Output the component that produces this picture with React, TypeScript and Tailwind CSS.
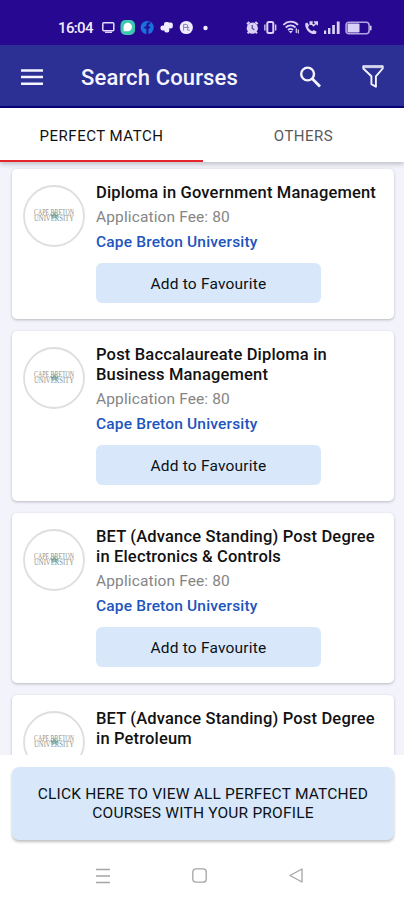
const courses: { lines: string[] }[] = [
  { lines: ["Diploma in Government Management"] },
  { lines: ["Post Baccalaureate Diploma in", "Business Management"] },
  { lines: ["BET (Advance Standing) Post Degree", "in Electronics & Controls"] },
  { lines: ["BET (Advance Standing) Post Degree", "in Petroleum"] },
];

function StatusBar() {
  return (
    <div className="h-[45px] shrink-0 bg-[#260990]">
      <svg width="404" height="45" viewBox="0 0 404 45" fill="none">
        <text x="58" y="33" fontSize="15" fontWeight="500" fill="#f0ecff" textLength="35.5" className="font-[Roboto,sans-serif]">16:04</text>
        <rect x="102.8" y="22.8" width="11" height="8" rx="1" stroke="#e1dcfa" strokeWidth="1.5" />
        <path d="M105 32.3h7" stroke="#e1dcfa" strokeWidth="1.3" />
        <rect x="120.5" y="20" width="14.5" height="15" rx="5" fill="#3cc9b0" />
        <path d="M123.6 31.2V27a4.2 4.2 0 1 1 4.2 4.2z" fill="#fff" />
        <circle cx="147.2" cy="27.5" r="6.6" fill="#1c70dd" />
        <path d="M146.4 34v-5.4h-2v-2.2h2v-1.2c0-2.1 1.1-3.1 3.8-2.8v1.9c-1.3-.1-1.8.2-1.8 1.2v.9h1.8l-.4 2.2h-1.4V34z" fill="#260990" />
        <g fill="#f0ecff">
          <rect x="164" y="22" width="5.4" height="5" rx="2" />
          <rect x="167.8" y="22.5" width="5" height="6" rx="2" />
          <rect x="160.5" y="25.5" width="5.5" height="5" rx="2" />
          <rect x="164.3" y="27.5" width="5" height="5" rx="2" />
          <path d="M164 25h5v5h-5z" />
        </g>
        <circle cx="186.3" cy="27.5" r="6.6" fill="#f0ecff" />
        <path d="M183.6 30.6v-6.2h2.6a1.5 1.5 0 0 1 0 3h-2.6m2.6 0h3m-1.5 0v2.8h2" stroke="#8d82b8" strokeWidth="1" />
        <circle cx="205.5" cy="28" r="2.2" fill="#f0ecff" />
        <circle cx="252.3" cy="28.2" r="5.6" fill="#d9d2f6" />
        <path d="m247 24 2.4-2.1m5.9 0 2.4 2.1M248.7 32l-1 1.4m8.2-1.4 1 1.4" stroke="#d9d2f6" strokeWidth="2" />
        <path d="M252.2 25v3.5l2.2 1.2" stroke="#483396" strokeWidth="1.1" />
        <rect x="267.3" y="22" width="6" height="11" rx="1.5" stroke="#d9d2f6" strokeWidth="2" />
        <path d="M264.9 24.5v6m10.8-6v6" stroke="#d9d2f6" strokeWidth="1.3" />
        <g stroke="#d9d2f6" strokeWidth="1.8">
          <path d="M283.3 24.8c4.5-4.1 10.4-4.1 14.7 0M285.7 27.5c3-2.7 6.9-2.7 9.8 0M288 30c1.5-1.3 3.5-1.3 5 0" />
        </g>
        <path d="m288.7 31 2 2.5 2-2.5z" fill="#d9d2f6" />
        <path d="M296.3 28.3v4.8m2-3.7v4.2" stroke="#d9d2f6" strokeWidth="1.2" />
        <path d="m305.2 23.5 2-1 2 3.1-1.2 1.4c1 2.2 2.2 3.3 4.3 4.2l1.4-1.2 3 1.8-1 2.2c-5.4 1-10.9-4.5-10.5-10.5z" fill="#d9d2f6" />
        <path d="m310.3 22 3.2 3.7 3.7-3.7m-3.3 0h3.3v3.3M310.3 25v-3h2.5" stroke="#d9d2f6" strokeWidth="1.6" />
        <g fill="#d9d2f6">
          <rect x="324" y="30.5" width="2.2" height="3.5" />
          <rect x="328" y="28" width="2.4" height="6" />
          <rect x="332.2" y="25" width="2.7" height="9" />
          <rect x="336.8" y="21.5" width="2.8" height="12.5" />
          <rect x="347.5" y="23.5" width="12" height="9" rx="1" />
          <rect x="370" y="25.5" width="1.5" height="5" rx=".7" />
        </g>
        <rect x="346.1" y="22.3" width="23" height="11.5" rx="3" stroke="#b1a5df" strokeWidth="1.6" />
      </svg>
    </div>
  );
}

function AppBar() {
  return (
    <header className="flex h-[63px] shrink-0 items-center border-b-2 border-[#080378] bg-[#2c2f93] pt-[2px] pr-[20px] pl-[21px]">
      <svg width="22" height="18" viewBox="0 0 22 18" fill="#f5f5ff">
        <path d="M0 1.2h22v2.5H0zM0 7.8h22v2.5H0zM0 14.4h22v2.5H0z" />
      </svg>
      <h1 className="ml-[38px] flex-1 pt-[3px] text-[22px] leading-7 font-medium tracking-[0.14px] whitespace-nowrap text-[#f5f5ff]">Search Courses</h1>
      <svg width="22" height="22" viewBox="0 0 22 22" fill="none" stroke="#f5f5ff" strokeWidth="2.4">
        <circle cx="8.6" cy="8" r="6.4" />
        <path d="m13.3 12.7 7.7 7.7" strokeWidth="2.8" />
      </svg>
      <svg className="ml-[41px]" width="22" height="23" viewBox="0 0 22 23" fill="none" stroke="#f5f5ff" strokeWidth="1.9" strokeLinejoin="round">
        <path d="M1.3 1.2h19.4v2.3l-6.8 7.8v10.5l-4.5-2.7v-7.8L1.3 3.5z" />
        <path d="M1.5 2.2h19" stroke="#c8cae9" />
      </svg>
    </header>
  );
}

function Tabs() {
  return (
    <nav className="relative z-10 flex h-[54px] shrink-0 bg-white text-[15px] shadow-[0_2px_5px_rgba(0,0,0,0.22)]">
      <div className="flex w-[203px] items-center justify-center border-b-2 border-[#e4252c] pt-[4px] text-[#111]">
        <span className="tracking-[0.5px] whitespace-nowrap">PERFECT MATCH</span>
      </div>
      <div className="flex flex-1 items-center justify-center border-b-2 border-transparent pt-[4px] text-[#5a5a5a]">
        <span className="tracking-[0.5px]">OTHERS</span>
      </div>
    </nav>
  );
}

function UniversityLogo() {
  return (
    <svg className="mt-[2px] shrink-0" width="62" height="62" viewBox="0 0 62 62">
      <circle cx="31" cy="31" r="30" fill="#fff" stroke="#dedede" strokeWidth="1.8" />
      <path d="m27 29 3 1 1-4 2 4 3-1-2 4h-5z" fill="#78aaa0" opacity=".75" />
      <g className="font-['Liberation_Serif',serif]" fill="#727d7b" fontSize="7.5" opacity=".85">
        <text x="11" y="30" textLength="40" lengthAdjust="spacingAndGlyphs">CAPE BRETON</text>
        <text x="11" y="36.3" textLength="40" lengthAdjust="spacingAndGlyphs">UNIVERSITY</text>
      </g>
    </svg>
  );
}

function CourseCard({ lines }: { lines: string[] }) {
  return (
    <article className="flex shrink-0 rounded-[5px] bg-white pt-[14px] pr-2 pb-[16.5px] pl-[11px] shadow-[0_1px_3px_rgba(0,0,0,0.24)]">
      <UniversityLogo />
      <div className="ml-[11px] flex-1">
        <h2 className="text-[16.5px] leading-[20px] font-medium tracking-[0.17px] text-[#111]">
          {lines.map((line) => (
            <span key={line} className="block whitespace-nowrap">{line}</span>
          ))}
        </h2>
        <p className="mt-[4px] text-[15.5px] leading-5 tracking-[0.12px] text-[#858585]">Application Fee: 80</p>
        <p className="mt-[5px] text-[15.5px] leading-5 font-medium tracking-[0.17px] text-[#1d55bd]">Cape Breton University</p>
        <button className="mt-[11px] block h-[39.5px] w-[225px] rounded-md bg-[#d8e8fa] pt-[3px] text-[15.5px] tracking-[0.2px] text-[#0b1117]">Add to Favourite</button>
      </div>
    </article>
  );
}

function NavigationBar() {
  return (
    <div className="flex h-[60px] shrink-0 items-center justify-between pt-[11px] pr-[101px] pl-[96px] text-[#a5a5a5]">
      <svg width="14" height="16" viewBox="0 0 14 16" stroke="currentColor" strokeWidth="1.3">
        <path d="M0 1.5h14M0 8h14M0 14.5h14" />
      </svg>
      <svg width="15" height="15" viewBox="0 0 15 15" fill="none" stroke="currentColor" strokeWidth="1.3">
        <rect x=".8" y=".8" width="13.4" height="13.4" rx="3" />
      </svg>
      <svg width="14" height="15" viewBox="0 0 14 15" fill="none" stroke="currentColor" strokeWidth="1.3" strokeLinejoin="round">
        <path d="M13 1v13L1 7.5z" />
      </svg>
    </div>
  );
}

export default function App() {
  return (
    <div className="flex h-[900px] w-[404px] flex-col overflow-hidden bg-white font-[Roboto,sans-serif]">
      <StatusBar />
      <AppBar />
      <Tabs />
      <main className="flex h-[593px] shrink-0 flex-col gap-3 overflow-hidden bg-[#f2f3fb] pt-[7px] pr-[10px] pl-[12px]">
        {courses.map((course) => (
          <CourseCard key={course.lines.join(" ")} lines={course.lines} />
        ))}
      </main>
      <div className="h-[85px] shrink-0 pt-[12px] pr-[10px] pl-[12px]">
        <button className="block h-[73px] w-full rounded-[7px] bg-[#d8e8fa] pt-px text-[15.5px] leading-[19px] text-[#0b1117] shadow-[0_2px_3px_rgba(0,0,0,0.25)]">
          <span className="block tracking-[0.2px] whitespace-nowrap">CLICK HERE TO VIEW ALL PERFECT MATCHED</span>
          <span className="block tracking-[0.2px]">COURSES WITH YOUR PROFILE</span>
        </button>
      </div>
      <NavigationBar />
    </div>
  );
}
